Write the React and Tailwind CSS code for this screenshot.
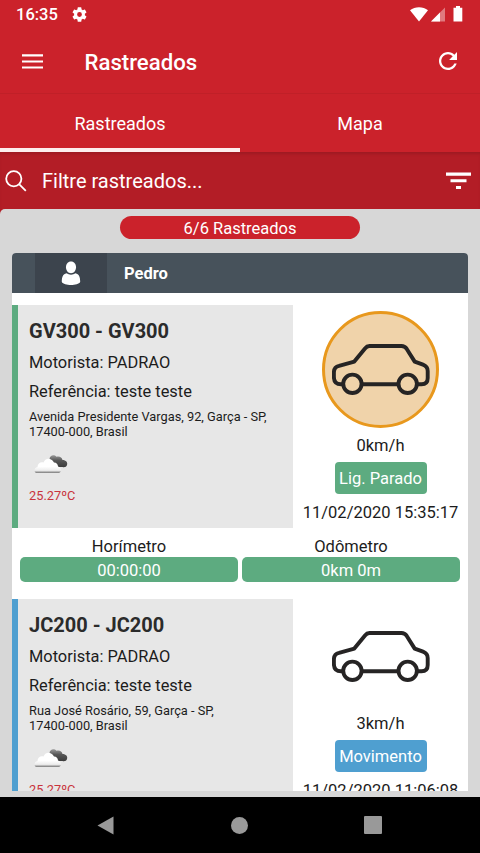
import React from 'react';

const vehicles = [
    {
        name: 'GV300 - GV300',
        driver: 'PADRAO',
        reference: 'teste teste',
        address: ['Avenida Presidente Vargas, 92, Garça - SP,', '17400-000, Brasil'],
        temperature: '25.27ºC',
        speed: '0km/h',
        status: 'Lig. Parado',
        date: '11/02/2020 15:35:17',
        hourMeter: '00:00:00',
        odometer: '0km 0m',
        moving: false,
    },
    {
        name: 'JC200 - JC200',
        driver: 'PADRAO',
        reference: 'teste teste',
        address: ['Rua José Rosário, 59, Garça - SP,', '17400-000, Brasil'],
        temperature: '25.27ºC',
        speed: '3km/h',
        status: 'Movimento',
        date: '11/02/2020 11:06:08',
        moving: true,
    },
];

const CarIcon = () => (
    <svg width="98" height="52" viewBox="0 0 98 52" fill="none" stroke="#262424" strokeWidth="3.9" strokeLinejoin="round">
        <path d="M11 40.3H9C4 40.3 1.9 37.5 1.9 33V28.5C1.9 24.5 3.5 22.6 7 21.8L22.3 17.6L33 4.4C34.4 2.6 35.5 2 37.5 2H69.5C72 2 73.3 2.8 74.6 4.7L82.7 17.6L91 20.7C94.3 22 95.7 24 95.7 27V34C95.7 38 93.5 40.3 89.5 40.3H85" />
        <path d="M30 40.3H66" />
        <circle cx="20.4" cy="39.8" r="9.2" />
        <circle cx="75.7" cy="39.8" r="9.2" />
    </svg>
);

const WeatherIcon = () => (
    <svg width="34" height="20" viewBox="0 0 34 20">
        <defs>
            <linearGradient id="dark" x1="0" y1="0" x2="0" y2="1">
                <stop offset="0" stopColor="#999" />
                <stop offset="0.45" stopColor="#555" />
                <stop offset="1" stopColor="#3c3c3c" />
            </linearGradient>
            <linearGradient id="light" x1="0" y1="0" x2="0" y2="1">
                <stop offset="0.55" stopColor="#fff" />
                <stop offset="0.82" stopColor="#ececec" />
                <stop offset="1" stopColor="#777" />
            </linearGradient>
        </defs>
        <path d="M15.500 5C16 1 20 0.200 22.500 2.800C25.500 1.800 28 3.500 28.500 6C32 6 34 8.500 33 11C32.500 13 30.500 13.500 28.500 13H19Z" fill="url(#dark)" />
        <path d="M2.500 19C-0.500 18.500 0 13.500 3.500 13C3.500 9 7 7.500 9.500 8.500C11 4 17 3 20 8.500C22.500 8.500 24 10.500 24 12.500C27 13 28.500 18 25 19Z" fill="url(#light)" />
    </svg>
);

const StatusBar = () => (
    <div className="flex h-7 items-center justify-between pl-4 pr-[17px] text-white">
        <div className="flex items-center gap-[14px]">
            <span className="pt-[2px] text-[16.500px] font-medium leading-7">16:35</span>
            <svg width="15" height="15" viewBox="2 2 20 20" fill="currentColor">
                <path d="M19.140 12.940c.04-.3.060-.61.060-.94 0-.32-.02-.64-.07-.94l2.030-1.580a.49.49 0 0 0 .12-.61l-1.920-3.320a.49.49 0 0 0-.59-.22l-2.390.96a7 7 0 0 0-1.620-.94l-.36-2.540a.48.48 0 0 0-.48-.41h-3.840a.47.47 0 0 0-.47.41l-.36 2.540c-.59.24-1.130.57-1.620.94l-2.390-.96a.47.47 0 0 0-.59.22L2.740 8.870a.47.47 0 0 0 .12.61l2.030 1.580c-.05.3-.09.63-.09.94s.02.64.07.94l-2.030 1.580a.49.49 0 0 0-.12.61l1.920 3.320c.12.22.37.29.59.22l2.390-.96c.5.38 1.030.7 1.620.94l.36 2.540c.05.24.24.41.48.41h3.840c.24 0 .44-.17.47-.41l.36-2.540a6.800 6.800 0 0 0 1.620-.94l2.390.96c.22.08.47 0 .59-.22l1.920-3.320a.47.47 0 0 0-.12-.61zM12 15.200A3.200 3.200 0 1 1 12 8.800a3.200 3.200 0 0 1 0 6.400" />
            </svg>
        </div>
        <div className="flex items-center">
            <svg width="18" height="15" viewBox="0 0 18 15" fill="currentColor">
                <path d="M9 14.500L0 3.200C5 -0.700 13 -0.700 18 3.200Z" />
            </svg>
            <svg className="ml-[3px]" width="14" height="15" viewBox="0 0 14 15" fill="currentColor">
                <path d="M0 14.500L14 0.500V14.500Z" opacity="0.4" />
                <path d="M0 14.500L9 5.500V14.500Z" />
            </svg>
            <svg className="ml-2" width="10" height="16" viewBox="0 0 10 16" fill="currentColor">
                <path d="M3 0H7V1.700H9.300V15.500H0.500V1.700H3Z" />
            </svg>
        </div>
    </div>
);

const Header = () => (
    <div className="flex h-[66px] items-center border-b border-[#c02028] pl-[22px] pr-[23px] pt-[2px] text-white">
        <svg width="22" height="15" viewBox="0 0 22 15" stroke="currentColor" strokeWidth="2.2">
            <path d="M0 1.300H21M0 7.500H21M0 13.500H21" />
        </svg>
        <h1 className="ml-[40.500px] flex-1 pt-px text-[22.200px] font-medium leading-8">Rastreados</h1>
        <svg className="mb-0.5" width="18" height="18" viewBox="80 80 352 352" fill="currentColor">
            <path d="M256 388c-72.600 0-132-59.400-132-132s59.400-132 132-132c36.300 0 69.300 15.400 92.400 39.600L278 234h154V80l-51.700 51.700C348.400 99.800 304.400 80 256 80c-96.800 0-176 79.200-176 176s78.100 176 176 176c81 0 148.300-54.100 169.400-128h-46.500c-18.800 49.600-67.200 84-122.900 84z" />
        </svg>
    </div>
);

const Tabs = () => (
    <div className="flex h-[58px] text-[18px] text-white">
        <div className="w-1/2 border-b-4 border-[#fdeeee] pt-[3px] text-center leading-[54px]">Rastreados</div>
        <div className="w-1/2 pt-[3px] text-center leading-[54px]">Mapa</div>
    </div>
);

const Search = () => (
    <div className="flex h-[61px] shrink-0 items-center bg-[#b31d26] pb-[3px] pl-[5px] pr-[9px] text-white shadow-[inset_0_3px_3px_-1px_rgba(0,0,0,0.12)]">
        <svg width="22" height="22" viewBox="0 0 22 22" fill="none" stroke="currentColor" strokeWidth="1.800">
            <circle cx="8.800" cy="8.800" r="7.600" />
            <path d="M14.300 14.300L20.800 20.800" />
        </svg>
        <span className="ml-[15px] flex-1 text-[20px]">Filtre rastreados...</span>
        <svg className="mb-[2px]" width="25" height="17" viewBox="0 0 25 17" fill="currentColor">
            <path d="M0 0.500H25V3.700H0ZM4.500 7.300H20.500V10.300H4.500ZM10 14H15V17H10Z" />
        </svg>
    </div>
);

const Meter = ({ label, value }) => (
    <div className="flex-1 text-center">
        <div className="h-[20px] text-[16.500px] leading-[20px] text-[#1c1c1c]">{label}</div>
        <div className="h-[25px] rounded-[5px] bg-[#5dab80] text-[16.500px] leading-[27px] text-white">{value}</div>
    </div>
);

const VehicleItem = ({ vehicle }) => (
    <div className="mt-3">
        <div className="flex h-[223px]">
            <div className={`w-[281px] shrink-0 border-l-[6px] bg-[#e7e7e7] pl-[11px] text-[#1c1c1c] ${vehicle.moving ? 'border-[#4f9fd0]' : 'border-[#5dab80]'}`}>
                <h2 className="mt-[12px] text-[20px] font-bold leading-[28px] text-[#2b2b2b]">{vehicle.name}</h2>
                <p className="mt-[3px] text-[16.400px] leading-[29px]">Motorista: {vehicle.driver}</p>
                <p className="text-[16.400px] leading-[29px]">Referência: {vehicle.reference}</p>
                <p className="mt-[3px] whitespace-nowrap text-[12.800px] leading-[15px]">
                    {vehicle.address[0]}
                    <br />
                    {vehicle.address[1]}
                </p>
                <div className="ml-[5px] mt-[15px]">
                    <WeatherIcon />
                </div>
                <p className="mt-[14px] text-[12.800px] leading-[15px] text-[#c9343d]">{vehicle.temperature}</p>
            </div>
            <div className="flex flex-1 flex-col items-center text-[16.500px] text-[#1c1c1c]">
                {vehicle.moving ? (
                    <div className="mt-[7px] flex h-[101px] w-[117px] items-center justify-center pt-px">
                        <CarIcon />
                    </div>
                ) : (
                    <div className="mt-[6px] flex h-[117px] w-[117px] items-center justify-center rounded-full border-[3px] border-[#e8981d] bg-[#f0d3aa]">
                        <CarIcon />
                    </div>
                )}
                <span className={`leading-[22px] ${vehicle.moving ? 'mt-[6px]' : 'mt-[7px]'}`}>{vehicle.speed}</span>
                <span className={`mt-[5px] h-[32px] w-[92px] whitespace-nowrap rounded-[4px] text-center leading-[34px] text-white ${vehicle.moving ? 'bg-[#4f9fd0]' : 'bg-[#5dab80]'}`}>
                    {vehicle.status}
                </span>
                <span className="mt-[7px] whitespace-nowrap leading-[23px]">{vehicle.date}</span>
            </div>
        </div>
        {vehicle.hourMeter && (
            <div className="flex h-[59px] gap-[4px] px-2 pt-[9px]">
                <Meter label="Horímetro" value={vehicle.hourMeter} />
                <Meter label="Odômetro" value={vehicle.odometer} />
            </div>
        )}
    </div>
);

const NavBar = () => (
    <div className="flex h-14 shrink-0 items-center justify-between bg-black pl-[97px] pr-[98px] text-[#999]">
        <svg width="17" height="19" viewBox="0 0 17 19" fill="currentColor">
            <path d="M16.500 0.500V18.500L0.500 9.500Z" />
        </svg>
        <div className="ml-px h-[17px] w-[17px] rounded-full bg-current" />
        <div className="h-[18px] w-[18px] rounded-[1px] bg-current" />
    </div>
);

const App = () => {
    return (
        <div className="flex h-[853px] w-[480px] flex-col overflow-hidden bg-[#b31d26] font-['Roboto',sans-serif]">
            <div className="shrink-0 bg-[#cb222b]">
                <StatusBar />
                <Header />
                <Tabs />
            </div>
            <Search />
            <div className="-mt-[4px] flex min-h-0 flex-1 flex-col rounded-tl-[5px] bg-[#d7d7d7] px-3 pb-1.5 pt-[7px]">
                <div className="mx-auto h-[23px] w-[240px] shrink-0 rounded-full bg-[#cb222b] text-center text-[16.500px] leading-[25px] text-white">
                    6/6 Rastreados
                </div>
                <div className="mt-[14px] min-h-0 flex-1 overflow-hidden rounded-t-[4px] bg-white">
                    <div className="flex h-[40px] items-center bg-[#47525b] pl-[23px]">
                        <div className="flex h-full w-[72px] items-center justify-center bg-[#3c444d] text-white">
                            <svg width="20" height="25" viewBox="0 0 20 25" fill="currentColor">
                                <path d="M10 0.500C13.200 0.500 15 3 15 6.300C15 9.500 13 12.300 10 12.300C7 12.300 5 9.500 5 6.300C5 3 6.800 0.500 10 0.500Z" />
                                <path d="M5.500 12.300C8 14.200 12 14.200 14.500 12.300C18 13.200 19.200 16 19.200 21C17 25 3 25 0.800 21C0.800 16 2 13.200 5.500 12.300Z" />
                            </svg>
                        </div>
                        <span className="ml-[17px] pt-[2px] text-[16.500px] font-bold text-white">Pedro</span>
                    </div>
                    {vehicles.map((vehicle) => (
                        <VehicleItem key={vehicle.name} vehicle={vehicle} />
                    ))}
                </div>
            </div>
            <NavBar />
        </div>
    );
};

export default App;
